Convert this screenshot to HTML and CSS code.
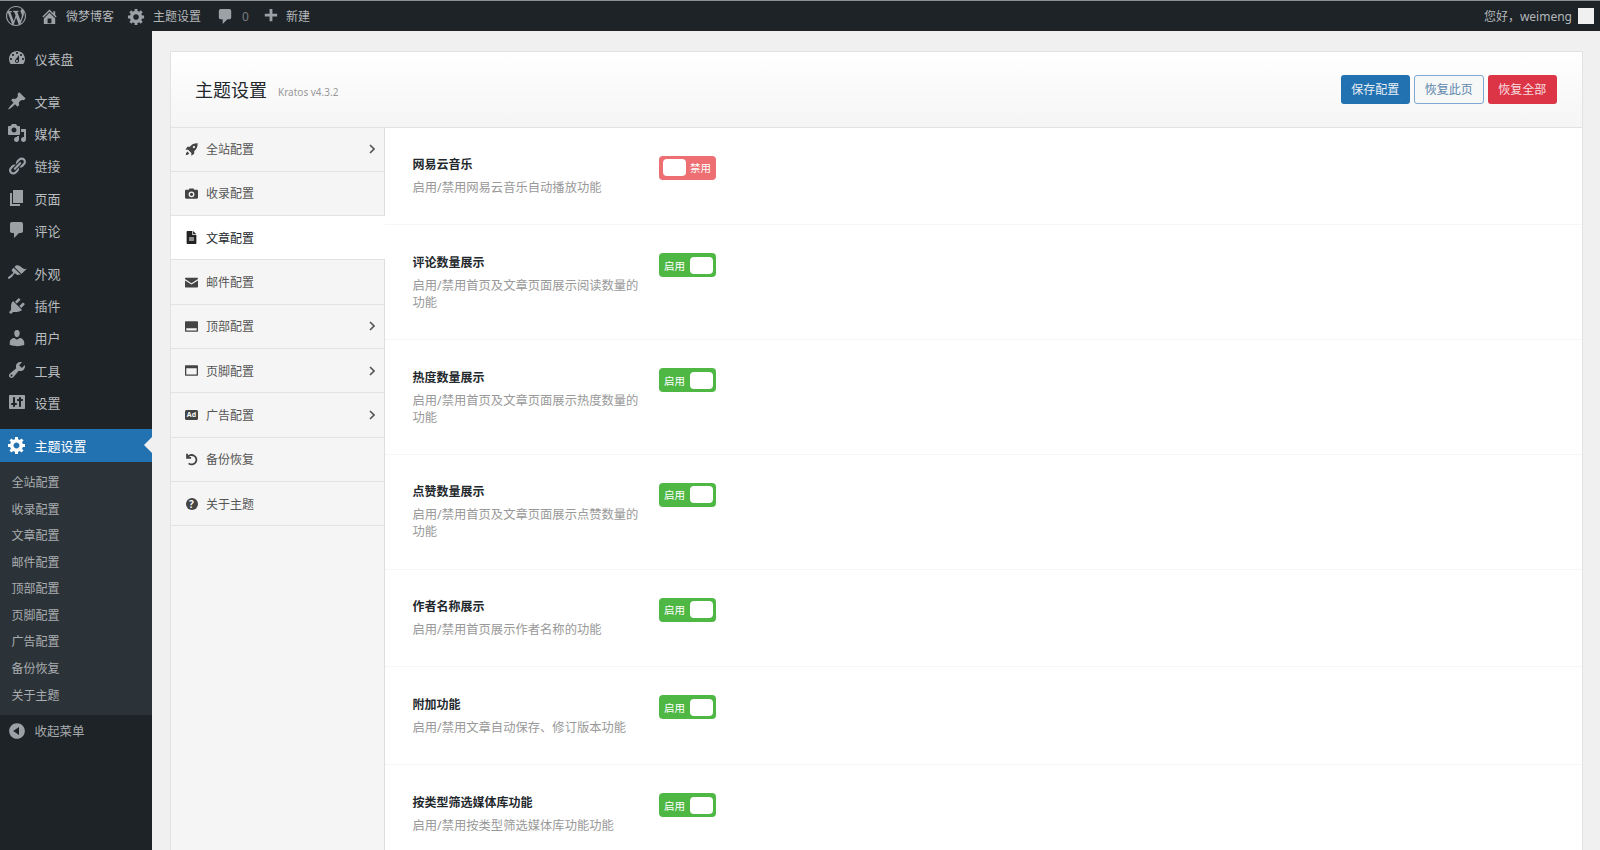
FILE: index.html
```html
<!DOCTYPE html>
<html lang="zh-CN">
<head>
<meta charset="UTF-8">
<meta name="viewport" content="width=device-width, initial-scale=1.0">
<title>主题设置</title>
<link rel="stylesheet" href="styles.css">
</head>

<body>
  <svg class="icon-defs" aria-hidden="true">
    <symbol id="i-wp" viewBox="0 0 20 20"><path d="M20 10c0-5.51-4.49-10-10-10C4.48 0 0 4.49 0 10c0 5.52 4.48 10 10 10 5.51 0 10-4.48 10-10zM7.78 15.37L4.37 6.22c.55-.02 1.17-.08 1.17-.08.5-.06.44-1.13-.06-1.11 0 0-1.45.11-2.37.11-.18 0-.37 0-.58-.01C4.12 2.69 6.87 1.11 10 1.11c2.33 0 4.45.87 6.05 2.34-.68-.11-1.65.39-1.65 1.58 0 .74.45 1.36.9 2.1.35.61.55 1.36.55 2.46 0 1.49-1.4 5-1.4 5l-3.03-8.37c.54-.02.82-.17.82-.17.5-.05.44-1.25-.06-1.22 0 0-1.44.12-2.38.12-.87 0-2.33-.12-2.33-.12-.5-.03-.56 1.2-.06 1.22l.92.08 1.26 3.41zM17.41 10c.24-.64.74-1.87.43-4.25.7 1.29 1.05 2.71 1.05 4.25 0 3.29-1.73 6.24-4.4 7.78.97-2.59 1.94-5.2 2.92-7.78zM6.1 18.09C3.12 16.65 1.11 13.53 1.11 10c0-1.3.23-2.48.72-3.59C3.25 10.3 4.67 14.2 6.1 18.09zm4.03-6.63l2.58 6.98c-.86.29-1.76.45-2.71.45-.79 0-1.57-.11-2.29-.33.81-2.38 1.62-4.74 2.42-7.1z"/></symbol>
    <symbol id="i-home" viewBox="0 0 20 20"><path d="M16 8.5l1.53 1.53-1.06 1.06L10 4.62l-6.47 6.47-1.06-1.06L10 2.5l4 4v-2h2v4zm-6-2.46l6 5.99V18H4v-5.97zM12 17v-5H8v5h4z"/></symbol>
    <symbol id="i-gear" viewBox="0 0 20 20"><path d="M18 12h-2.18c-.17.7-.44 1.35-.81 1.93l1.54 1.54-2.1 2.1-1.54-1.54c-.58.36-1.23.63-1.91.79V19H8v-2.18c-.68-.16-1.33-.43-1.91-.79l-1.54 1.54-2.12-2.12 1.54-1.54c-.36-.58-.63-1.23-.79-1.91H1V9.03h2.17c.16-.7.44-1.35.8-1.94L2.43 5.55l2.1-2.1 1.54 1.54c.58-.37 1.24-.64 1.93-.81V2h3v2.18c.68.16 1.33.43 1.91.79l1.54-1.54 2.12 2.12-1.54 1.54c.36.59.64 1.24.8 1.94H18V12zm-8.5 1.5c1.66 0 3-1.34 3-3s-1.34-3-3-3-3 1.34-3 3 1.34 3 3 3z"/></symbol>
    <symbol id="i-comment" viewBox="0 0 20 20"><path d="M5 2h9c1.1 0 2 .9 2 2v7c0 1.1-.9 2-2 2h-2l-5 5v-5H5c-1.1 0-2-.9-2-2V4c0-1.1.9-2 2-2z"/></symbol>
    <symbol id="i-plus" viewBox="0 0 20 20"><path d="M17 7v3h-5v5H9v-5H4V7h5V2h3v5h5z"/></symbol>
    <symbol id="i-dashboard" viewBox="0 0 20 20"><path d="M3.76 16h12.48c1.1-1.37 1.76-3.11 1.76-5 0-4.42-3.58-8-8-8s-8 3.58-8 8c0 1.89.66 3.63 1.76 5zM10 4c.55 0 1 .45 1 1s-.45 1-1 1-1-.45-1-1 .45-1 1-1zM6 6c.55 0 1 .45 1 1s-.45 1-1 1-1-.45-1-1 .45-1 1-1zm8 0c.55 0 1 .45 1 1s-.45 1-1 1-1-.45-1-1 .45-1 1-1zm-5.37 5.55L12 7v6c0 1.1-.9 2-2 2s-2-.9-2-2c0-.57.24-1.08.63-1.45zM4 10c.55 0 1 .45 1 1s-.45 1-1 1-1-.45-1-1 .45-1 1-1zm12 0c.55 0 1 .45 1 1s-.45 1-1 1-1-.45-1-1 .45-1 1-1zm-5 3c0-.55-.45-1-1-1s-1 .45-1 1 .45 1 1 1 1-.45 1-1z"/></symbol>
    <symbol id="i-post" viewBox="0 0 20 20"><path d="M10.44 3.02l1.82-1.82 6.36 6.35-1.83 1.82c-1.05-.68-2.48-.57-3.41.36l-.75.75c-.92.93-1.04 2.35-.35 3.41l-1.83 1.82-2.41-2.41-2.8 2.79c-.42.42-3.38 2.71-3.8 2.29s1.86-3.39 2.28-3.81l2.79-2.79L4.1 9.36l1.83-1.82c1.05.69 2.48.57 3.4-.36l.75-.75c.93-.92 1.05-2.35.36-3.41z"/></symbol>
    <symbol id="i-media" viewBox="0 0 20 20"><path d="M13 11V4c0-.55-.45-1-1-1h-1.67L9 1H5L3.67 3H2c-.55 0-1 .45-1 1v7c0 .55.45 1 1 1h10c.55 0 1-.45 1-1zM7 4.5c1.38 0 2.5 1.12 2.5 2.5S8.38 9.5 7 9.5 4.5 8.38 4.5 7 5.62 4.5 7 4.5zM14 6h5v10.5c0 1.38-1.12 2.5-2.5 2.5S14 17.88 14 16.5s1.12-2.5 2.5-2.5c.17 0 .34.02.5.05V9h-3V6zm-4 8.05V13h2v3.5c0 1.38-1.12 2.5-2.5 2.5S7 17.88 7 16.5 8.12 14 9.5 14c.17 0 .34.02.5.05z"/></symbol>
    <symbol id="i-links" viewBox="0 0 20 20"><path d="M17.74 2.76c1.68 1.69 1.68 4.41 0 6.1l-1.53 1.52c-1.12 1.12-2.7 1.47-4.14 1.09l2.62-2.61.76-.77.76-.76c.84-.84.84-2.2 0-3.04-.84-.85-2.2-.85-3.04 0l-.77.76-3.38 3.38c-.37-1.44-.02-3.02 1.1-4.14l1.52-1.53c1.69-1.68 4.42-1.68 6.1 0zM8.59 13.43l5.34-5.34c.42-.42.42-1.1 0-1.52-.44-.43-1.13-.39-1.53 0l-5.33 5.34c-.42.42-.42 1.1 0 1.52.44.43 1.13.39 1.52 0zm-.76 2.29l4.14-4.15c.38 1.44.03 3.02-1.09 4.14l-1.52 1.53c-1.69 1.68-4.41 1.68-6.1 0-1.68-1.68-1.68-4.42 0-6.1l1.53-1.52c1.12-1.12 2.7-1.47 4.14-1.1l-4.14 4.15c-.85.84-.85 2.2 0 3.05.84.84 2.2.84 3.04 0z"/></symbol>
    <symbol id="i-page" viewBox="0 0 20 20"><path d="M6 15V2h10v13H6zm-1 1h8v2H3V5h2v11z"/></symbol>
    <symbol id="i-brush" viewBox="0 0 20 20"><path d="M14.48 11.06L7.41 3.99l1.5-1.5c.5-.56 2.3-.47 3.51.32 1.21.8 1.43 1.28 2.91 2.1 1.18.64 2.45 1.26 4.45.85zm-.71.71L6.7 4.7 4.93 6.47c-.39.39-.39 1.02 0 1.41l1.06 1.06c.39.39.39 1.03 0 1.42-.6.6-1.43 1.11-2.21 1.69-.35.26-.7.53-1.01.84C1.43 13.23.4 14.96 1.05 15.6c.64.65 2.37-.38 3.71-1.71.31-.31.58-.66.85-1.01.57-.78 1.08-1.61 1.69-2.21.39-.39 1.02-.39 1.41 0l1.06 1.06c.39.39 1.02.39 1.41 0z"/></symbol>
    <symbol id="i-plugin" viewBox="0 0 20 20"><path d="M13.11 4.36L9.87 7.6 8 5.73l3.24-3.24c.35-.34 1.05-.2 1.56.32.52.51.66 1.21.31 1.55zm-8 1.77l.91-1.12 9.01 9.01-1.19.84c-.71.71-2.63 1.16-3.82 1.16H6.14L4.9 17.26c-.59.59-1.54.59-2.12 0-.59-.58-.59-1.53 0-2.12l1.24-1.24v-3.88c0-1.13.4-3.19 1.09-3.89zm7.26 3.97l3.24-3.24c.34-.35 1.04-.21 1.55.31.52.51.66 1.21.31 1.55l-3.24 3.25z"/></symbol>
    <symbol id="i-user" viewBox="0 0 20 20"><path d="M10 9.25c-2.27 0-2.73-3.44-2.73-3.44C7 4.02 7.82 2 9.97 2c2.16 0 2.98 2.02 2.71 3.81 0 0-.41 3.44-2.68 3.44zm0 2.57L12.72 10c2.39 0 4.52 2.33 4.52 4.53v2.49s-3.65 1.13-7.24 1.13c-3.65 0-7.24-1.13-7.24-1.13v-2.49c0-2.25 1.94-4.48 4.47-4.48z"/></symbol>
    <symbol id="i-wrench" viewBox="0 0 20 20"><path d="M16.68 9.77c-1.34 1.34-3.3 1.67-4.95.99l-5.41 6.52c-.99.99-2.59.99-3.58 0s-.99-2.59 0-3.57l6.52-5.42c-.68-1.65-.35-3.61.99-4.95 1.28-1.28 3.12-1.62 4.72-1.06l-2.89 2.89 2.82 2.82 2.86-2.87c.53 1.58.18 3.39-1.08 4.65zM3.81 16.21c.4.39 1.04.39 1.43 0 .4-.4.4-1.04 0-1.44-.39-.39-1.03-.39-1.43 0-.39.4-.39 1.04 0 1.44z"/></symbol>
    <symbol id="i-settings" viewBox="0 0 20 20"><path d="M18 16V4c0-.55-.45-1-1-1H3c-.55 0-1 .45-1 1v12c0 .55.45 1 1 1h14c.55 0 1-.45 1-1zM8 11h1c.55 0 1 .45 1 1s-.45 1-1 1H8v1c0 .55-.45 1-1 1s-1-.45-1-1v-1H5c-.55 0-1-.45-1-1s.45-1 1-1h1V6c0-.55.45-1 1-1s1 .45 1 1v5zm7-2h-1v5c0 .55-.45 1-1 1s-1-.45-1-1V9h-1c-.55 0-1-.45-1-1s.45-1 1-1h1V6c0-.55.45-1 1-1s1 .45 1 1v1h1c.55 0 1 .45 1 1s-.45 1-1 1z"/></symbol>
    <symbol id="i-collapse" viewBox="0 0 20 20"><path d="M10 2.16c4.33 0 7.84 3.51 7.84 7.84s-3.51 7.84-7.84 7.84S2.16 14.33 2.16 10 5.71 2.16 10 2.16zm2 11.72V6.12L6.18 9.97z"/></symbol>

    <symbol id="n-rocket" viewBox="0 0 16 16"><path fill-rule="evenodd" d="M15.6.4C11.6.2 8.3 1.6 5.9 4.6H3L.5 8.2h3.3l4 4v3.4l3.5-2.5v-2.9c3-2.4 4.5-5.8 4.3-9.8zM11 3.6a1.4 1.4 0 1 1 0 2.8 1.4 1.4 0 0 1 0-2.8z"/><path d="M3 10.6c-1 .6-1.8 2-2 4.2 2.2-.2 3.6-1 4.2-2z"/></symbol>
    <symbol id="n-camera" viewBox="0 0 16 16"><path fill-rule="evenodd" d="M1.5 3.5H4.6L5.5 1.8h5l.9 1.7h3.1c.8 0 1.5.7 1.5 1.5v8c0 .8-.7 1.5-1.5 1.5h-13C.7 14.5 0 13.8 0 13V5c0-.8.7-1.5 1.5-1.5zM8 5.4a3.6 3.6 0 1 0 0 7.2 3.6 3.6 0 0 0 0-7.2zM8 7a2 2 0 1 1 0 4 2 2 0 0 1 0-4z"/></symbol>
    <symbol id="n-file" viewBox="0 0 12 16"><path fill-rule="evenodd" d="M1 0h6v4.5c0 .3.2.5.5.5H12v10c0 .6-.4 1-1 1H1c-.6 0-1-.4-1-1V1c0-.6.4-1 1-1zM3 8v1.2h6V8zm0 2.6v1.2h6v-1.2z"/><path d="M8 0l4 4H8z"/></symbol>
    <symbol id="n-mail" viewBox="0 0 16 12"><path d="M1.2 0h13.6c.7 0 1.2.5 1.2 1.2v.5L8 6.8 0 1.7v-.5C0 .5.5 0 1.2 0z"/><path d="M0 3.4l8 5 8-5v7.4c0 .7-.5 1.2-1.2 1.2H1.2C.5 12 0 11.5 0 10.8z"/></symbol>
    <symbol id="n-top" viewBox="0 0 16 13"><path fill-rule="evenodd" d="M1.2 0h13.6c.7 0 1.2.5 1.2 1.2v10.6c0 .7-.5 1.2-1.2 1.2H1.2C.5 13 0 12.5 0 11.8V1.2C0 .5.5 0 1.2 0zM1.6 8.6v2.8h12.8V8.6z"/></symbol>
    <symbol id="n-bottom" viewBox="0 0 16 13"><path fill-rule="evenodd" d="M1.2 0h13.6c.7 0 1.2.5 1.2 1.2v10.6c0 .7-.5 1.2-1.2 1.2H1.2C.5 13 0 12.5 0 11.8V1.2C0 .5.5 0 1.2 0zM1.6 3.6v7.8h12.8V3.6z"/></symbol>
    <symbol id="n-undo" viewBox="0 0 16 16"><path fill="none" stroke="currentColor" stroke-width="2.2" d="M2.5 1v5h5M3 5.8A5.8 5.8 0 1 1 4.5 12.7"/></symbol>
    <symbol id="n-chevron" viewBox="0 0 6 10"><path fill="none" stroke="currentColor" stroke-width="1.6" d="M1 1l4 4-4 4"/></symbol>
  </svg>

  <div class="adminbar">
    <div class="bar-left">
      <svg class="bar-logo"><use href="#i-wp"/></svg>
      <a class="bar-item bar-site"><svg class="bar-icon"><use href="#i-home"/></svg>微梦博客</a>
      <a class="bar-item bar-theme"><svg class="bar-icon"><use href="#i-gear"/></svg>主题设置</a>
      <a class="bar-item bar-comments"><svg class="bar-icon"><use href="#i-comment"/></svg><span class="bar-count">0</span></a>
      <a class="bar-item bar-new"><svg class="bar-icon"><use href="#i-plus"/></svg>新建</a>
    </div>
    <div class="bar-right">
      <span>您好，weimeng</span>
      <span class="avatar"></span>
    </div>
  </div>

  <div class="wrap">
    <nav class="sidebar">
      <a class="menu-item"><svg class="menu-icon"><use href="#i-dashboard"/></svg>仪表盘</a>
      <div class="menu-sep"></div>
      <a class="menu-item"><svg class="menu-icon"><use href="#i-post"/></svg>文章</a>
      <a class="menu-item"><svg class="menu-icon"><use href="#i-media"/></svg>媒体</a>
      <a class="menu-item"><svg class="menu-icon"><use href="#i-links"/></svg>链接</a>
      <a class="menu-item"><svg class="menu-icon"><use href="#i-page"/></svg>页面</a>
      <a class="menu-item"><svg class="menu-icon"><use href="#i-comment"/></svg>评论</a>
      <div class="menu-sep"></div>
      <a class="menu-item"><svg class="menu-icon"><use href="#i-brush"/></svg>外观</a>
      <a class="menu-item"><svg class="menu-icon"><use href="#i-plugin"/></svg>插件</a>
      <a class="menu-item"><svg class="menu-icon"><use href="#i-user"/></svg>用户</a>
      <a class="menu-item"><svg class="menu-icon"><use href="#i-wrench"/></svg>工具</a>
      <a class="menu-item"><svg class="menu-icon"><use href="#i-settings"/></svg>设置</a>
      <div class="menu-sep"></div>
      <a class="menu-item menu-active"><svg class="menu-icon"><use href="#i-gear"/></svg>主题设置</a>
      <div class="submenu">
        <a>全站配置</a>
        <a>收录配置</a>
        <a>文章配置</a>
        <a>邮件配置</a>
        <a>顶部配置</a>
        <a>页脚配置</a>
        <a>广告配置</a>
        <a>备份恢复</a>
        <a>关于主题</a>
      </div>
      <a class="menu-item menu-collapse"><svg class="menu-icon"><use href="#i-collapse"/></svg>收起菜单</a>
    </nav>

    <main class="main">
      <div class="panel">
        <div class="panel-header">
          <h1>主题设置</h1>
          <small>Kratos v4.3.2</small>
          <div class="actions">
            <button class="btn btn-save">保存配置</button>
            <button class="btn btn-page">恢复此页</button>
            <button class="btn btn-all">恢复全部</button>
          </div>
        </div>

        <div class="panel-body">
          <ul class="tabs">
            <li><svg class="tab-icon"><use href="#n-rocket"/></svg>全站配置<svg class="chevron"><use href="#n-chevron"/></svg></li>
            <li><svg class="tab-icon"><use href="#n-camera"/></svg>收录配置</li>
            <li class="tab-active"><svg class="tab-icon tab-icon-file"><use href="#n-file"/></svg>文章配置</li>
            <li><svg class="tab-icon tab-icon-wide"><use href="#n-mail"/></svg>邮件配置</li>
            <li><svg class="tab-icon tab-icon-wide"><use href="#n-top"/></svg>顶部配置<svg class="chevron"><use href="#n-chevron"/></svg></li>
            <li><svg class="tab-icon tab-icon-wide"><use href="#n-bottom"/></svg>页脚配置<svg class="chevron"><use href="#n-chevron"/></svg></li>
            <li><span class="ad-icon">Ad</span>广告配置<svg class="chevron"><use href="#n-chevron"/></svg></li>
            <li><svg class="tab-icon"><use href="#n-undo"/></svg>备份恢复</li>
            <li><span class="help-icon">?</span>关于主题</li>
          </ul>

          <div class="options">
            <div class="option">
              <div class="option-text">
                <h4>网易云音乐</h4>
                <p>启用/禁用网易云音乐自动播放功能</p>
              </div>
              <div class="switch switch-off"><span class="knob"></span><span>禁用</span></div>
            </div>
            <div class="option">
              <div class="option-text">
                <h4>评论数量展示</h4>
                <p>启用/禁用首页及文章页面展示阅读数量的功能</p>
              </div>
              <div class="switch"><span>启用</span><span class="knob"></span></div>
            </div>
            <div class="option">
              <div class="option-text">
                <h4>热度数量展示</h4>
                <p>启用/禁用首页及文章页面展示热度数量的功能</p>
              </div>
              <div class="switch"><span>启用</span><span class="knob"></span></div>
            </div>
            <div class="option">
              <div class="option-text">
                <h4>点赞数量展示</h4>
                <p>启用/禁用首页及文章页面展示点赞数量的功能</p>
              </div>
              <div class="switch"><span>启用</span><span class="knob"></span></div>
            </div>
            <div class="option">
              <div class="option-text">
                <h4>作者名称展示</h4>
                <p>启用/禁用首页展示作者名称的功能</p>
              </div>
              <div class="switch"><span>启用</span><span class="knob"></span></div>
            </div>
            <div class="option">
              <div class="option-text">
                <h4>附加功能</h4>
                <p>启用/禁用文章自动保存、修订版本功能</p>
              </div>
              <div class="switch"><span>启用</span><span class="knob"></span></div>
            </div>
            <div class="option">
              <div class="option-text">
                <h4>按类型筛选媒体库功能</h4>
                <p>启用/禁用按类型筛选媒体库功能功能</p>
              </div>
              <div class="switch"><span>启用</span><span class="knob"></span></div>
            </div>
          </div>
        </div>
      </div>
    </main>
  </div>
</body>
</html>
```

FILE: styles.css
```css
* {
  margin: 0;
  padding: 0;
  box-sizing: border-box;
}

html, body {
  height: 850px;
  overflow: hidden;
}

body {
  display: flex;
  flex-direction: column;
  background-color: #f0f0f1;
  font-family: "Noto Sans", "Noto Sans CJK SC", sans-serif;
  font-size: 13px;
  color: #444;
}

.icon-defs {
  display: none;
}

/* top bar */
.adminbar {
  flex: none;
  height: 31px;
  display: flex;
  justify-content: space-between;
  align-items: center;
  background-color: #1d2327;
  border-top: 1px solid #8d9093;
  color: #b4b7ba;
  font-size: 12px;
  padding: 0 6px;
}

.bar-left,
.bar-right,
.bar-item {
  display: flex;
  align-items: center;
}

.bar-logo {
  width: 20px;
  height: 20px;
  fill: #9ca1a6;
  margin-right: 14px;
}

.bar-icon {
  width: 19px;
  height: 19px;
  fill: #9ca1a6;
  margin-right: 7px;
}

.bar-site {
  margin-right: 13px;
}

.bar-theme {
  margin-right: 15px;
}

.bar-comments {
  margin-right: 12px;
}

.bar-count {
  color: #777c80;
}

.bar-new .bar-icon {
  margin-right: 6px;
}

.bar-right {
  gap: 6px;
}

.avatar {
  width: 16px;
  height: 16px;
  background-color: #f0f0f0;
}

.wrap {
  flex: 1;
  display: flex;
  min-height: 0;
}

/* left menu */
.sidebar {
  flex: none;
  width: 151.5px;
  background-color: #1d2327;
  padding-top: 11px;
  color: #b9bcbf;
}

.menu-item {
  position: relative;
  height: 32.3px;
  display: flex;
  align-items: center;
  font-size: 13px;
}

.menu-icon {
  width: 20px;
  height: 20px;
  margin: 0 7.5px 0 7px;
  fill: #9ca1a6;
}

.menu-sep {
  height: 10.7px;
}

.menu-active {
  background-color: #2271b1;
  color: #fff;
}

.menu-active .menu-icon {
  fill: #fff;
}

.menu-active::after {
  content: "";
  position: absolute;
  right: 0;
  top: 8px;
  border: 8px solid transparent;
  border-right-color: #f0f0f1;
  border-left-width: 0;
}

.submenu {
  background-color: #2c3338;
  padding: 7px 0;
}

.submenu a {
  display: flex;
  align-items: center;
  height: 26.6px;
  padding-left: 11.5px;
  font-size: 12px;
  color: #a9adb0;
}

.menu-collapse {
  height: 32px;
  color: #a7aaad;
  font-size: 12.5px;
}

/* settings panel */
.main {
  flex: 1;
  min-width: 0;
  padding: 19.5px 17px 0 18.5px;
}

.panel {
  height: 820px;
  background-color: #fff;
  border: 1px solid #e2e2e2;
  border-bottom: none;
  display: flex;
  flex-direction: column;
}

.panel-header {
  flex: none;
  height: 76px;
  display: flex;
  align-items: center;
  padding: 0 25px 0 24px;
  background: linear-gradient(to bottom, #ffffff, #f5f5f5);
  border-bottom: 1px solid #e2e2e2;
}

.panel-header h1 {
  font-size: 18px;
  font-weight: 400;
  color: #23282d;
  margin-right: 11px;
}

.panel-header small {
  font-size: 10px;
  color: #999;
  padding-top: 5px;
}

.actions {
  margin-left: auto;
  display: flex;
  gap: 4px;
}

.btn {
  width: 69.5px;
  height: 29px;
  border: 1px solid transparent;
  border-radius: 3px;
  font-family: inherit;
  font-size: 12px;
  cursor: pointer;
}

.btn-save {
  background-color: #2271b1;
  color: #e8f0f6;
}

.btn-page {
  background-color: #f6f7f7;
  border-color: #7fa9d0;
  color: #5d86ab;
}

.btn-all {
  background-color: #dc3545;
  color: #f7dfe1;
}

.panel-body {
  flex: 1;
  display: flex;
  min-height: 0;
}

.tabs {
  flex: none;
  width: 214px;
  list-style: none;
  background-color: #f5f5f5;
  border-right: 1px solid #dedede;
}

.tabs li {
  height: 44.3px;
  display: flex;
  align-items: center;
  padding: 0 9px 0 14px;
  border-bottom: 1px solid #e2e2e2;
  font-size: 12px;
  color: #555;
}

.tabs .tab-active {
  background-color: #fff;
  margin-right: -1px;
  color: #23282d;
}

.tab-icon {
  flex: none;
  width: 13px;
  height: 13px;
  margin-right: 8px;
  fill: #444;
  color: #444;
}

.tab-icon-file {
  fill: #222;
}

.tab-icon-wide {
  height: 11px;
}

.ad-icon {
  flex: none;
  width: 13px;
  height: 10px;
  margin-right: 8px;
  border-radius: 1.5px;
  background-color: #444;
  color: #f5f5f5;
  font-size: 7px;
  font-weight: 700;
  line-height: 10px;
  text-align: center;
}

.help-icon {
  flex: none;
  width: 12px;
  height: 12px;
  margin: 0 8.5px 0 .5px;
  border-radius: 50%;
  background-color: #444;
  color: #f5f5f5;
  font-size: 10px;
  font-weight: 700;
  line-height: 12px;
  text-align: center;
}

.chevron {
  flex: none;
  width: 6px;
  height: 10px;
  margin-left: auto;
  color: #555;
}

.options {
  flex: 1;
  min-width: 0;
}

.option {
  display: flex;
  align-items: flex-start;
  padding: 27.5px 0 28.25px 27.5px;
  border-bottom: 1px solid #f6f6f6;
}

.option-text {
  flex: none;
  width: 246.5px;
  padding-right: 17px;
}

.option-text h4 {
  font-size: 12px;
  font-weight: 700;
  line-height: 20px;
  color: #23282d;
}

.option-text p {
  margin-top: 4px;
  font-size: 12.3px;
  line-height: 17px;
  color: #999;
}

.switch {
  flex: none;
  width: 57px;
  height: 24px;
  margin-top: .5px;
  display: flex;
  justify-content: space-between;
  align-items: center;
  padding: 0 3.5px 0 5px;
  border-radius: 4px;
  background-color: #4fb845;
  color: #fff;
  font-size: 10.5px;
}

.switch-off {
  background-color: #ed6f72;
  padding: 0 5px 0 3.5px;
}

.knob {
  width: 23px;
  height: 17px;
  border-radius: 4px;
  background-color: #fff;
}
```
